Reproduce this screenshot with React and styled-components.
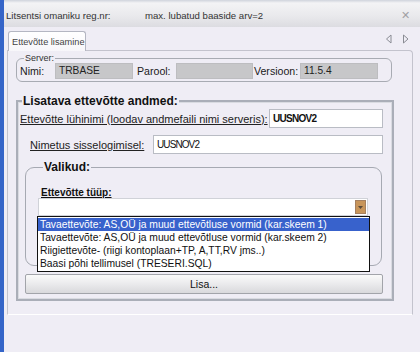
import styled, { createGlobalStyle } from "styled-components";

const GlobalStyle = createGlobalStyle`
  body {
    margin: 0;
    font-family: "Liberation Sans", Arial, sans-serif;
    color: #1a1a1a;
  }
`;

const Window = styled.div`
  width: 420px;
  height: 352px;
  box-sizing: border-box;
  border-left: 4px solid #3565c8;
  background: #efedf5;
  display: flex;
  flex-direction: column;
  overflow: hidden;
`;

const TitleBar = styled.div`
  height: 27px;
  flex: none;
  display: flex;
  align-items: center;
  padding: 3px 0 0 2px;
  box-sizing: border-box;
  background: linear-gradient(#cfd3dc 0, #f3f3f5 3px, #e9e9ec 60%, #dcdce1 100%);
  font-size: 9.6px;
  color: #333;
`;

const TitleText = styled.span`
  width: ${(p) => p.$w}px;
  flex: none;
`;

const Close = styled.span`
  margin-left: auto;
  margin-right: 10px;
  color: #a0a0a4;
  font-size: 11px;
`;

const TabStrip = styled.div`
  height: 23px;
  flex: none;
  display: flex;
  align-items: flex-end;
  padding-left: 4px;
  position: relative;
  z-index: 1;
`;

const Tab = styled.div`
  width: 78px;
  height: 20px;
  box-sizing: border-box;
  border: 1px solid #b4b6c2;
  border-bottom: none;
  border-radius: 3px 3px 0 0;
  background: linear-gradient(#ffffff, #f7f6fa);
  font-size: 9.2px;
  color: #444;
  padding: 5px 0 0 3px;
  margin-bottom: -1px;
`;

const Arrows = styled.div`
  margin-left: auto;
  margin-right: 10px;
  align-self: center;
  margin-top: 1px;
  display: flex;
  gap: 9px;
`;

const Panel = styled.div`
  margin-left: 3px;
  width: 406px;
  height: 265px;
  flex: none;
  box-sizing: border-box;
  border: 1px solid #c3c3cd;
  border-bottom-color: #ffffff;
  border-top-right-radius: 4px;
  padding: 2px 0 0 8px;
`;

const ServerSet = styled.fieldset`
  margin: 0;
  padding: 0 0 2px 3px;
  width: 376px;
  box-sizing: border-box;
  border: 1px solid #a8abb3;
  border-radius: 6px;
`;

const SmallLegend = styled.legend`
  font-size: 9px;
  padding: 0 1px;
  margin-left: 4px;
  color: #333;
`;

const ServerRow = styled.div`
  display: grid;
  grid-template-columns: 35px 78px 43px 77px 47px 78px;
  align-items: center;
  font-size: 10.6px;
`;

const ServerLabel = styled.span`
  padding-left: ${(p) => p.$pad || 0}px;
`;

const GrayField = styled.div`
  height: 16px;
  box-sizing: border-box;
  background: #c7c7c9;
  border: 1px solid #bdbdc0;
  padding: 1px 0 0 3px;
  font-size: 10.2px;
  color: #222;
`;

const DataSet = styled.fieldset`
  margin: 12px 0 0 0;
  padding: 1px 9px 5px 0;
  width: 375px;
  box-sizing: border-box;
  border: 2px solid #aaaeb8;
  box-shadow: inset 0 0 0 1px #d9dbe1;
`;

const BoldLegend = styled.legend`
  font-size: ${(p) => p.$size || 12}px;
  font-weight: bold;
  padding: 0 1px;
  margin-left: ${(p) => p.$ml || 4}px;
  background: #efedf5;
  color: #111;
`;

const FieldRow = styled.div`
  display: flex;
  align-items: center;
  justify-content: space-between;
  padding-left: ${(p) => p.$indent || 0}px;
  margin-top: ${(p) => p.$mt || 0}px;
  font-size: 11px;
`;

const Label = styled.span`
  text-decoration: underline;
  color: #222;
`;

const TextInput = styled.div`
  width: ${(p) => p.$w}px;
  height: 19px;
  box-sizing: border-box;
  background: #fff;
  border: 1px solid #b9bcc4;
  padding: 3px 0 0 3px;
  font-size: 10px;
  font-weight: ${(p) => (p.$bold ? "bold" : "normal")};
  letter-spacing: ${(p) => (p.$bold ? -0.7 : -0.9)}px;
  color: #111;
`;

const ChoiceSet = styled.fieldset`
  margin: 6px 0 0 7px;
  padding: 0 12px 49px 12px;
  width: 357px;
  box-sizing: border-box;
  border: 1px solid #a6a9b2;
  border-radius: 9px;
`;

const TypeLabel = styled.div`
  font-size: 10px;
  font-weight: bold;
  text-decoration: underline;
  margin: 13px 0 0 3px;
  color: #111;
`;

const ComboWrap = styled.div`
  position: relative;
  width: 330px;
`;

const Combo = styled.div`
  height: 18px;
  box-sizing: border-box;
  background: #fff;
  border: 1px solid #d0d2d8;
  display: flex;
  justify-content: flex-end;
  padding: 1px 1px 1px 0;
`;

const ComboButton = styled.div`
  width: 11px;
  background: #c8955a;
  border: 1px solid #a58060;
  box-sizing: border-box;
  display: flex;
  align-items: center;
  justify-content: center;
`;

const DropList = styled.ul`
  position: absolute;
  left: -1px;
  top: 100%;
  width: 333px;
  margin: 0;
  padding: 1px 0;
  list-style: none;
  box-sizing: border-box;
  background: #fff;
  border: 1px solid #111;
  z-index: 2;
`;

const DropItem = styled.li`
  height: 13px;
  line-height: 13px;
  padding-left: 2px;
  font-size: 10.3px;
  white-space: nowrap;
  background: ${(p) => (p.$active ? "#3862cc" : "transparent")};
  color: ${(p) => (p.$active ? "#fff" : "#111")};
`;

const AddButton = styled.button`
  display: block;
  margin: 8px 0 0 7px;
  width: 358px;
  height: 20px;
  border: 1px solid #a2a4aa;
  border-radius: 2px;
  background: linear-gradient(#fafafa 0, #ececee 45%, #d9d9dc 100%);
  font-family: inherit;
  font-size: 10.5px;
  color: #111;
  padding: 0;
`;

function TriangleIcon({ dir }) {
  const d = dir === "left" ? "M6 1 L1.5 5 L6 9 Z" : "M1.5 1 L6 5 L1.5 9 Z";
  return (
    <svg width="8" height="10" viewBox="0 0 8 10">
      <path d={d} fill="none" stroke="#8a8c94" strokeWidth="1" />
    </svg>
  );
}

const items = [
  "Tavaettevõte: AS,OÜ ja muud ettevõtluse vormid (kar.skeem 1)",
  "Tavaettevõte: AS,OÜ ja muud ettevõtluse vormid (kar.skeem 2)",
  "Riigiettevõte- (riigi kontoplaan+TP, A,TT,RV jms..)",
  "Baasi põhi tellimusel (TRESERI.SQL)",
];

export default function App() {
  return (
    <>
      <GlobalStyle />
      <Window>
        <TitleBar>
          <TitleText $w={139}>Litsentsi omaniku reg.nr:</TitleText>
          <TitleText $w={130}>max. lubatud baaside arv=2</TitleText>
          <Close>✕</Close>
        </TitleBar>

        <TabStrip>
          <Tab>Ettevõtte lisamine</Tab>
          <Arrows>
            <TriangleIcon dir="left" />
            <TriangleIcon dir="right" />
          </Arrows>
        </TabStrip>

        <Panel>
          <ServerSet>
            <SmallLegend>Server:</SmallLegend>
            <ServerRow>
              <ServerLabel>Nimi:</ServerLabel>
              <GrayField>TRBASE</GrayField>
              <ServerLabel $pad={4}>Parool:</ServerLabel>
              <GrayField />
              <ServerLabel $pad={1}>Versioon:</ServerLabel>
              <GrayField>11.5.4</GrayField>
            </ServerRow>
          </ServerSet>

          <DataSet>
            <BoldLegend>Lisatava ettevõtte andmed:</BoldLegend>
            <FieldRow $indent={2}>
              <Label>Ettevõtte lühinimi (loodav andmefaili nimi serveris):</Label>
              <TextInput $w={114} $bold>UUSNOV2</TextInput>
            </FieldRow>
            <FieldRow $indent={12} $mt={7}>
              <Label>Nimetus sisselogimisel:</Label>
              <TextInput $w={230}>UUSNOV2</TextInput>
            </FieldRow>

            <ChoiceSet>
              <BoldLegend $ml={5}>Valikud:</BoldLegend>
              <TypeLabel>Ettevõtte tüüp:</TypeLabel>
              <ComboWrap>
                <Combo>
                  <ComboButton>
                    <svg width="5" height="3" viewBox="0 0 5 3">
                      <path d="M0 0 H5 L2.5 3 Z" fill="#5a4a3a" />
                    </svg>
                  </ComboButton>
                </Combo>
                <DropList>
                  {items.map((t, i) => (
                    <DropItem key={t} $active={i === 0}>
                      {t}
                    </DropItem>
                  ))}
                </DropList>
              </ComboWrap>
            </ChoiceSet>

            <AddButton>Lisa...</AddButton>
          </DataSet>
        </Panel>
      </Window>
    </>
  );
}
